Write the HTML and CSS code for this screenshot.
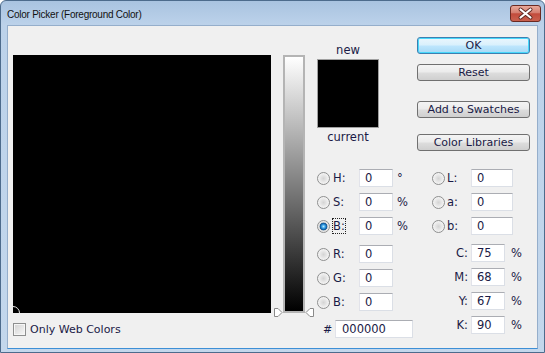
FILE: index.html
```html
<!DOCTYPE html>
<html lang="en">
<head>
  <meta charset="UTF-8" />
  <title>Color Picker (Foreground Color)</title>
  <link rel="stylesheet" href="styles.css">
</head>
<body>
  <div class="window">
    <div class="titlebar">
      <span class="title">Color Picker (Foreground Color)</span>
      <button class="close" aria-label="Close">
        <svg width="31" height="17" viewBox="0 0 31 17">
          <path d="M10.5 4.5 L20.5 12.5 M20.5 4.5 L10.5 12.5" stroke="#5b2620" stroke-width="4" stroke-linecap="round" fill="none"/>
          <path d="M10.5 4.5 L20.5 12.5 M20.5 4.5 L10.5 12.5" stroke="#ffffff" stroke-width="2.2" stroke-linecap="round" fill="none"/>
        </svg>
      </button>
    </div>

    <div class="panel">
      <!-- colour field + brightness slider -->
      <div class="picker">
        <div class="picker-row">
          <div class="field"><span class="marker"></span></div>
          <div class="slider">
            <div class="slider-bar"></div>
            <svg class="arrow arrow-left" width="9" height="9" viewBox="0 0 9 9">
              <polygon points="0.5,0.5 4,0.5 8,4.5 4,8.5 0.5,8.5" fill="#fff" stroke="#8a8a8a"/>
            </svg>
            <svg class="arrow arrow-right" width="9" height="9" viewBox="0 0 9 9">
              <polygon points="8.5,0.5 5,0.5 1,4.5 5,8.5 8.5,8.5" fill="#fff" stroke="#8a8a8a"/>
            </svg>
          </div>
        </div>
        <label class="web-only"><span class="checkbox"></span>Only Web Colors</label>
      </div>

      <div class="controls">
        <div class="top-row">
          <div class="swatch-col">
            <div class="swatch-label">new</div>
            <div class="swatch"></div>
            <div class="swatch-label">current</div>
          </div>
          <div class="buttons">
            <button class="btn btn-ok">OK</button>
            <button class="btn btn-reset">Reset</button>
            <button class="btn btn-add">Add to Swatches</button>
            <button class="btn btn-lib">Color Libraries</button>
          </div>
        </div>

        <div class="fields">
          <div class="fields-left">
            <div class="group">
              <div class="row"><span class="radio"></span><span class="lbl">H:</span><input class="num" type="text" value="0"><span class="unit">°</span></div>
              <div class="row"><span class="radio"></span><span class="lbl">S:</span><input class="num" type="text" value="0"><span class="unit">%</span></div>
              <div class="row"><span class="radio checked"></span><span class="lbl"><span class="focus">B:</span></span><input class="num" type="text" value="0"><span class="unit">%</span></div>
            </div>
            <div class="group group-rgb">
              <div class="row"><span class="radio"></span><span class="lbl">R:</span><input class="num" type="text" value="0"></div>
              <div class="row"><span class="radio"></span><span class="lbl">G:</span><input class="num" type="text" value="0"></div>
              <div class="row"><span class="radio"></span><span class="lbl">B:</span><input class="num" type="text" value="0"></div>
            </div>
            <div class="row hex-row"><span class="hash">#</span><input class="num hex" type="text" value="000000"></div>
          </div>

          <div class="fields-right">
            <div class="group">
              <div class="row"><span class="radio"></span><span class="lbl lbl-lab">L:</span><input class="num num-lab" type="text" value="0"></div>
              <div class="row"><span class="radio"></span><span class="lbl lbl-lab">a:</span><input class="num num-lab" type="text" value="0"></div>
              <div class="row"><span class="radio"></span><span class="lbl lbl-lab">b:</span><input class="num num-lab" type="text" value="0"></div>
            </div>
            <div class="group group-cmyk">
              <div class="row"><span class="lbl-cmyk">C:</span><input class="num" type="text" value="75"><span class="unit unit-cmyk">%</span></div>
              <div class="row"><span class="lbl-cmyk">M:</span><input class="num" type="text" value="68"><span class="unit unit-cmyk">%</span></div>
              <div class="row"><span class="lbl-cmyk">Y:</span><input class="num" type="text" value="67"><span class="unit unit-cmyk">%</span></div>
              <div class="row"><span class="lbl-cmyk">K:</span><input class="num" type="text" value="90"><span class="unit unit-cmyk">%</span></div>
            </div>
          </div>
        </div>
      </div>
    </div>
  </div>
</body>
</html>
```

FILE: styles.css
```css
body {
  margin: 0;
  font-family: "DejaVu Sans", sans-serif;
  font-size: 11px;
  color: #1a1a46;
}
.window {
  width: 545px;
  height: 353px;
  box-sizing: border-box;
  border: 1px solid #4d6b8c;
  border-radius: 6px 6px 0 0;
  background: linear-gradient(#a9c3e0, #bcd2ea 24px, #c3d7ec);
  display: flex;
  flex-direction: column;
}
.titlebar {
  height: 24px;
  box-sizing: border-box;
  padding: 4px 3px 0 6px;
  display: flex;
  justify-content: space-between;
  align-items: flex-start;
}
.title {
  font-family: "Liberation Sans", Arial, sans-serif;
  font-size: 10px;
  letter-spacing: -0.25px;
  color: #111;
  padding-top: 4px;
}
.close {
  width: 31px;
  height: 17px;
  padding: 0;
  border: 1px solid #6a2a22;
  border-radius: 3px;
  background: linear-gradient(#e9a99a, #d47e70 45%, #c24b3c 52%, #c9614f);
  display: flex;
}
.close svg {
  margin: -1px;
}
.panel {
  flex: 1;
  margin: 0 6px 3px 6px;
  background: #f0f0f0;
  border: 1px solid #95aecb;
  border-bottom-color: #3d8fd6;
  display: flex;
  align-items: flex-start;
}

/* picker */
.picker {
  margin: 29px 0 0 5px;
}
.picker-row {
  display: flex;
}
.field {
  width: 258px;
  height: 258px;
  background: #000;
  position: relative;
  overflow: hidden;
}
.marker {
  position: absolute;
  left: -7px;
  top: 251px;
  width: 14px;
  height: 14px;
  box-sizing: border-box;
  border: 1px solid #e8e8e8;
  border-radius: 50%;
}
.slider {
  width: 22px;
  height: 258px;
  margin-left: 12px;
  position: relative;
}
.slider-bar {
  height: 100%;
  box-sizing: border-box;
  border: 2px solid #b4b4b4;
  background: linear-gradient(#ffffff, #000000);
}
.arrow {
  position: absolute;
  top: 253px;
}
.arrow-left { left: -9px; }
.arrow-right { left: 22px; }
.web-only {
  display: flex;
  align-items: center;
  margin-top: 10px;
}
.checkbox {
  width: 13px;
  height: 13px;
  box-sizing: border-box;
  border: 1px solid #8e8f8f;
  box-shadow: inset 0 0 0 1px #f6f6f6;
  background: linear-gradient(135deg, #d2d2d2, #f8f8f8);
  margin-right: 4px;
}

/* right side */
.controls {
  margin: 11px 0 0 12px;
}
.top-row {
  display: flex;
  align-items: flex-start;
}
.swatch-col {
  width: 62px;
  margin-top: 6px;
  text-align: center;
}
.swatch-label {
  line-height: 14px;
  font-size: 11.5px;
}
.swatch {
  height: 69px;
  box-sizing: border-box;
  border: 1px solid #a0a0a0;
  background: #000;
  margin: 2px 0;
}
.buttons {
  margin-left: 38px;
  width: 113px;
  display: flex;
  flex-direction: column;
}
.btn {
  height: 17px;
  padding: 0;
  font-family: "DejaVu Sans", sans-serif;
  font-size: 11px;
  color: #1a1a46;
  border: 1px solid #707070;
  border-radius: 3px;
  background: linear-gradient(#f4f4f4, #ebebeb 48%, #dddddd 52%, #cfcfcf);
}
.btn-ok {
  border-color: #3c7fb1;
  background: linear-gradient(#eaf6fd, #d9f0fc 48%, #bee6fd 52%, #a7d9f5);
  box-shadow: inset 0 0 0 1px #48d8fb;
}
.btn-reset { margin-top: 10px; }
.btn-add { margin-top: 20px; }
.btn-lib { margin-top: 16px; }

.fields {
  display: flex;
  margin-top: 15px;
}
.fields-left {
  width: 115px;
}
.row {
  height: 24px;
  display: flex;
  align-items: center;
}
.group-rgb { margin-top: 4px; }
.group-cmyk { margin-top: 3px; }
.hex-row { margin-top: 3px; }
.radio {
  width: 13px;
  height: 13px;
  box-sizing: border-box;
  border: 1px solid #8e8f8f;
  border-radius: 50%;
  background: radial-gradient(circle, #d4d4d4 0, #e6e6e6 3px, #f7f7f7 6px);
  margin-right: 3px;
}
.radio.checked {
  background: radial-gradient(circle, #b6ecff 0, #2d95e0 2px, #0c4f8e 3.5px, #d8d8d8 4.2px, #f7f7f7 6px);
}
.lbl {
  width: 26px;
  font-size: 11.5px;
}
.focus {
  outline: 1px dotted #222;
  outline-offset: 0;
}
.num {
  width: 34px;
  height: 18px;
  box-sizing: border-box;
  margin: 0;
  padding: 0 0 0 5px;
  border: 1px solid #dbdfe6;
  border-top-color: #abadb3;
  border-left-color: #e2e3ea;
  background: #fff;
  font-family: "DejaVu Sans", sans-serif;
  font-size: 11.5px;
  color: #1a1a46;
}
.unit {
  margin-left: 4px;
  font-size: 11.5px;
}
.hash {
  margin-left: 6px;
  width: 7px;
}
.hex {
  width: 78px;
  margin-left: 5px;
  padding-left: 6px;
}
.fields-right .radio {
  margin-right: 2px;
}
.lbl-lab {
  width: 24px;
}
.num-lab {
  width: 42px;
}
.lbl-cmyk {
  width: 39px;
  box-sizing: border-box;
  padding-right: 3px;
  text-align: right;
  font-size: 11.5px;
}
.unit-cmyk {
  margin-left: 6px;
}
```
